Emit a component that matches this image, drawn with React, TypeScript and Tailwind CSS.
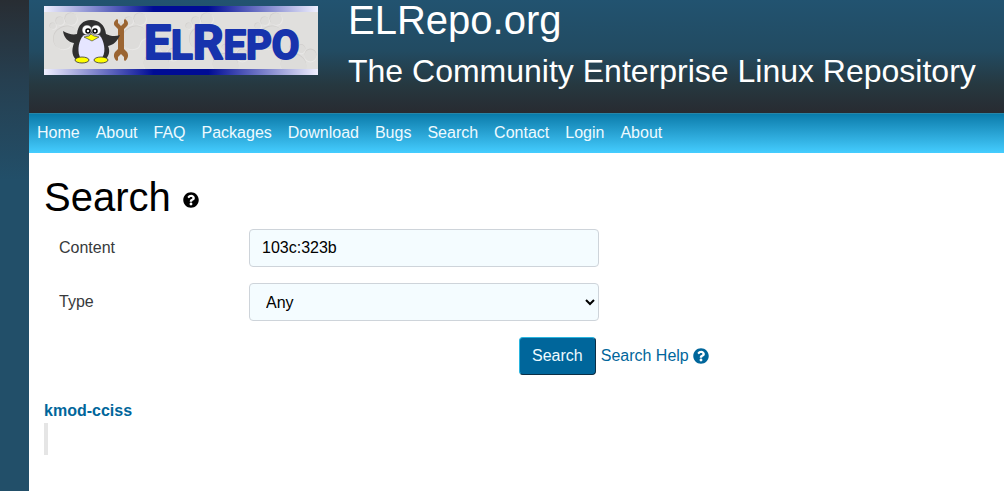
import { FaQuestionCircle } from "react-icons/fa";

const navItems = ["Home", "About", "FAQ", "Packages", "Download", "Bugs", "Search", "Contact", "Login", "About"];

// one embossed footprint, placed by its top left corner
function Footprint({ x, y, r = 0 }: { x: number; y: number; r?: number }) {
  const shapes = (
    <>
      <ellipse cx="4" cy="13" rx="3" ry="3" />
      <ellipse cx="11" cy="8" rx="4" ry="4" />
      <ellipse cx="22" cy="6" rx="6" ry="6" />
      <path d="M27 17C20 9 7 15 5 23C3 31 9 38 16 36C24 35 20 28 26 26C31 24 31 20 27 17Z" />
    </>
  );
  return (
    <g transform={`translate(${x} ${y}) rotate(${r} 15 18)`}>
      <g fill="#d0cecc" transform="translate(-0.6 -0.6)">{shapes}</g>
      <g fill="#e9e8e7" transform="translate(0.8 0.8)">{shapes}</g>
      <g fill="#dddcda">{shapes}</g>
    </g>
  );
}

function Logo() {
  return (
    <svg viewBox="0 0 274 69" className="block h-[69px] w-[274px] shrink-0" role="img" aria-label="ELRepo">
      <defs>
        <linearGradient id="stripe">
          <stop offset="0" stopColor="#f0f0ff" />
          <stop offset="0.4" stopColor="#000c95" />
          <stop offset="0.6" stopColor="#000c95" />
          <stop offset="1" stopColor="#f0f0ff" />
        </linearGradient>
        <clipPath id="plate">
          <rect y="6" width="274" height="57" />
        </clipPath>
      </defs>
      <rect width="274" height="69" fill="#e0dfdd" />
      <g clipPath="url(#plate)">
        <Footprint x={5} y={7} />
        <Footprint x={74} y={7} />
        <Footprint x={141} y={7} />
        <Footprint x={210} y={7} />
        <Footprint x={101} y={34} r={45} />
        <Footprint x={170} y={35} r={45} />
        <Footprint x={238} y={35} r={45} />
      </g>
      <rect width="274" height="6" fill="url(#stripe)" />
      <rect y="63" width="274" height="6" fill="url(#stripe)" />

      {/* Wrench */}
      <path
        d="M73 13C70 15 69 18 71 20L74 23V43L71 46C69 49 70 53 73 55L74 54V51L77 48L80 51V54L81 55C84 53 85 49 83 46L80 43V23L83 20C85 18 84 15 81 13L80 14V17L77 20L74 17V14Z"
        fill="#9b6532"
      />

      {/* Penguin */}
      <path
        d="M47 14C39 14 34 19 33 28C29 29 24 28 19 25C20 32 24 36 30 37C27 45 28 51 34 55H60C66 50 66 44 64 40C69 39 73 36 76 29C71 31 66 30 62 28C61 19 55 14 47 14Z"
        fill="#303030"
      />
      <path d="M38 31C43 26 52 26 57 31C61 38 62 48 57 53C51 56 42 56 37 53C33 47 34 37 38 31Z" fill="#e6e6ff" />
      <circle cx="43" cy="24" r="5" fill="#fff" stroke="#303030" strokeWidth="0.6" />
      <circle cx="52" cy="24" r="5" fill="#fff" stroke="#303030" strokeWidth="0.6" />
      <circle cx="44" cy="25" r="2" fill="#fff" stroke="#000" strokeWidth="1.5" />
      <circle cx="51" cy="25" r="2" fill="#fff" stroke="#000" strokeWidth="1.5" />
      <path d="M40 31L45 30L47 28L50 30L55 31L48 35Z" fill="#ff0" stroke="#333" strokeWidth="0.6" />
      <ellipse cx="38" cy="54" rx="7" ry="3" fill="#ff0" stroke="#333" strokeWidth="0.8" />
      <ellipse cx="57" cy="54" rx="7" ry="3" fill="#ff0" stroke="#333" strokeWidth="0.8" />

      <text
        x="100"
        y="53"
        fill="#1733ad"
        stroke="#1733ad"
        strokeWidth="2"
        strokeLinejoin="round"
        className="font-[Roboto,sans-serif] text-[40px] font-bold"
      >
        <tspan className="text-[48px]">E</tspan>
        <tspan>L</tspan>
        <tspan className="text-[48px]">R</tspan>
        <tspan>EPO</tspan>
      </text>
    </svg>
  );
}

export default function App() {
  return (
    <div className="min-h-screen flex bg-[#224f69] bg-[linear-gradient(to_bottom,#282d33_0px,#263f50_80px,#224f69_180px)] pl-[29px] font-['Liberation_Sans',Arial,sans-serif] text-base text-[#373a3c]">
      <div className="flex-1 bg-white">
        <header className="flex h-[113px] gap-[30px] bg-[linear-gradient(to_bottom,#225370,#224b62_45%,#263840_75%,#282b31)] px-[15px] text-white">
          <a href="#" className="mt-[6px]">
            <Logo />
          </a>
          <div>
            <h1 className="text-[40px] leading-10">ELRepo.org</h1>
            <p className="mt-[11px] text-[32px] leading-10">The Community Enterprise Linux Repository</p>
          </div>
        </header>

        <nav className="flex h-10 items-center gap-4 border-t border-[#2786a8] bg-linear-to-b from-[#087cab] to-[#44cdff] px-2 pb-0.5 text-[#eefaff]">
          {navItems.map((item, i) => (
            <a key={i} href="#">
              {item}
            </a>
          ))}
        </nav>

        <main className="px-[15px] pt-5">
          <h2 className="mb-2 flex items-center gap-3 text-[40px] leading-12 text-black">
            Search
            <a href="#" aria-label="Search help">
              <FaQuestionCircle className="mt-1.5 size-4" />
            </a>
          </h2>

          <form className="flex flex-col gap-4 px-[15px]" onSubmit={(e) => e.preventDefault()}>
            <div className="flex items-center">
              <label htmlFor="content" className="w-[190px]">
                Content
              </label>
              <input
                id="content"
                type="text"
                defaultValue="103c:323b"
                className="h-[38px] w-[350px] rounded border border-[#ced4da] bg-[#f4fcff] px-3 text-black"
              />
            </div>
            <div className="flex items-center">
              <label htmlFor="type" className="w-[190px]">
                Type
              </label>
              <select
                id="type"
                className="h-[38px] w-[350px] rounded border border-[#ced4da] bg-[#f4fcff] pl-3 text-black"
              >
                <option>Any</option>
                <option>Package</option>
                <option>Page</option>
              </select>
            </div>
            <div className="flex items-center gap-[5px] pl-[460px]">
              <button
                type="submit"
                className="h-[38px] rounded border border-t-[#29b5df] border-r-[#0b2e45] border-b-[#0b2e45] border-l-[#29b5df] bg-[#00669b] px-3 text-[#eefaff]"
              >
                Search
              </button>
              <a href="#" className="flex items-center gap-1 text-[#00669b]">
                Search Help <FaQuestionCircle />
              </a>
            </div>
          </form>

          <div className="mt-6">
            <a href="#" className="font-bold text-[#00669b]">
              kmod-cciss
            </a>
            <blockquote className="h-8 border-l-4 border-[#e5e5e5]" />
          </div>
        </main>
      </div>
    </div>
  );
}
